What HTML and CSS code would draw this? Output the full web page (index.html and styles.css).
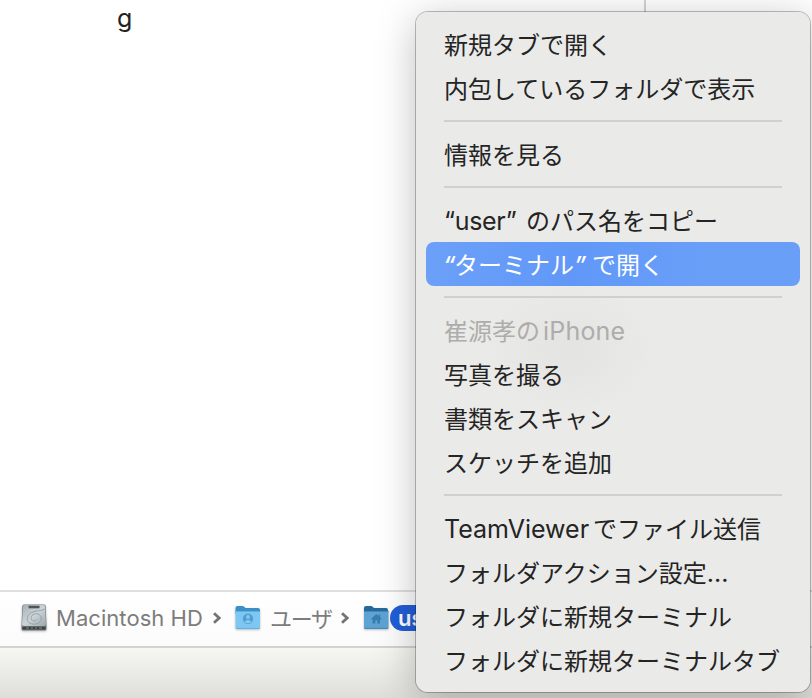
FILE: index.html
```html
<!DOCTYPE html>
<html lang="ja">
<head>
<meta charset="utf-8">
<title>Finder</title>
<link rel="stylesheet" href="styles.css">
</head>
<body>
<div class="window">
  <main class="files">
    <div class="file-name">g</div>
    <div class="column-line"></div>
  </main>
  <nav class="pathbar">
    <svg class="icon drive" width="28" height="30" viewBox="0 0 28 30">
      <defs>
        <linearGradient id="metal" x1="0" y1="0" x2="1" y2="1">
          <stop offset="0" stop-color="#a7afb4"/><stop offset=".5" stop-color="#cbd4d9"/><stop offset="1" stop-color="#9da6ab"/>
        </linearGradient>
      </defs>
      <path d="M4 1.500h20q1.500 0 1.700 1.500L26.500 22v4q0 1.500-1.500 1.500h-22Q1.500 27.500 1.500 26v-4L2.300 3Q2.500 1.500 4 1.500z" fill="#777e80"/>
      <path d="M4.500 2h19q1.500 0 1.600 1.500L26 21q0 2-2 2h-20q-2 0-2-2L2.900 3.500Q3 2 4.500 2z" fill="url(#metal)"/>
      <path d="M8.500 2.700h11v2.600h-11z" fill="#505759"/>
      <path d="M24.500 6c-3 2.500-8 1-13 3.500C7 12 6 17 9 19.500c3 2.300 8.500 2.200 11-.8 2.800-3.600.5-8-3.500-8-3.200 0-5.500 2-5.500 4.500 0 3 4.500 3.500 6 1.200" fill="none" stroke="#929ca2" stroke-width=".9"/>
      <path d="M2.500 23.700h23v2.800h-23z" fill="#3c4142"/>
      <path d="M6 25h3M11 25h2M15 25h2M19 25h3" stroke="#858b8c" stroke-width="1.200"/>
    </svg>
    <span class="crumb hd">Macintosh HD</span>
    <svg class="chevron" width="10" height="14" viewBox="0 0 10 14"><path d="M2 2.300 7.200 7 2 11.700"/></svg>
    <svg class="icon users" width="28" height="26" viewBox="0 0 28 26">
      <path d="M1.500 3Q1.500 1 3.500 1H9l2.600 2H24q2 0 2 2v4H1.500z" fill="#3b8fc6"/>
      <path d="M1.500 6h24.500v16.500q0 1.500-1.500 1.500H3q-1.500 0-1.500-1.500z" fill="#7fc7f3"/>
      <path d="M1.500 6.500h24.500M2 23.400h23.500" stroke="#5eb0e0"/>
      <circle cx="14" cy="13.700" r="5.200" fill="#509fd1"/>
      <circle cx="14" cy="12" r="1.900" fill="#86c9f2"/>
      <path d="M10.400 16.700q3.600-3.500 7.200 0-3.600 3-7.200 0z" fill="#86c9f2"/>
    </svg>
    <span class="crumb ja">ユーザ</span>
    <svg class="chevron second" width="10" height="14" viewBox="0 0 10 14"><path d="M2 2.300 7.200 7 2 11.700"/></svg>
    <svg class="icon home" width="27" height="26" viewBox="0 0 27 26">
      <path d="M1 3Q1 1 3 1h5.500l2.600 2H23q2 0 2 2v4H1z" fill="#28699b"/>
      <path d="M1 6h24.500v16.500q0 1.500-1.500 1.500H2.500Q1 24 1 22.500z" fill="#5da3d3"/>
      <path d="M1 6.500h24.500M1.500 23.400h23.500" stroke="#4389bb"/>
      <path d="m8 14 5.300-5 2.200 2V9.500h1.700v3l1.600 1.500-.8.800-1-.8v4.500h-2.700v-3.200h-2v3.200H9.600V14l-.8.800z" fill="#387db0"/>
    </svg>
    <span class="selected">user</span>
  </nav>
  <div class="desktop"></div>
</div>

<div class="menu">
  <div class="item">新規タブで開く</div>
  <div class="item">内包しているフォルダで表示</div>
  <div class="separator"></div>
  <div class="item">情報を見る</div>
  <div class="separator"></div>
  <div class="item"><span class="latin user">“user”</span>のパス名をコピー</div>
  <div class="item active"><span class="quote">“</span>ターミナル<span class="quote close">”</span>で開く</div>
  <div class="separator"></div>
  <div class="item disabled">崔源孝の<span class="latin phone">iPhone</span></div>
  <div class="item">写真を撮る</div>
  <div class="item">書類をスキャン</div>
  <div class="item">スケッチを追加</div>
  <div class="separator"></div>
  <div class="item"><span class="latin team">TeamViewer</span>でファイル送信</div>
  <div class="item">フォルダアクション設定<span class="latin dots">...</span></div>
  <div class="item">フォルダに新規ターミナル</div>
  <div class="item">フォルダに新規ターミナルタブ</div>
</div>
</body>
</html>
```

FILE: styles.css
```css
* { box-sizing: border-box; }
body {
  margin: 0;
  width: 812px;
  height: 698px;
  overflow: hidden;
  background: #fff;
  font-family: Inter, "Noto Sans CJK JP", sans-serif;
}
.window { height: 698px; display: flex; flex-direction: column; }
.files { height: 590px; display: flex; }
.file-name {
  width: 644px;
  padding-left: 117px;
  font-size: 25px;
  line-height: 36px;
  color: #222;
}
.column-line { width: 2px; background: #d3d3d3; }
.pathbar {
  height: 58px;
  display: flex;
  align-items: center;
  padding: 0 0 2px 20px;
  border-top: 2px solid #dfdfdf;
  border-bottom: 2px solid #d2d2d0;
  background: linear-gradient(#fff, #fbfbfb);
  white-space: nowrap;
}
.icon { flex: none; filter: drop-shadow(0 1px 1px rgba(0,0,0,.25)); }
.crumb { color: #7c7c7c; font-size: 22px; line-height: 30px; }
.hd { width: 148px; margin-left: 8px; letter-spacing: .05px; }
.ja { font-family: "Noto Sans CJK JP", sans-serif; width: 63px; margin-left: 8px; padding-bottom: 2px; letter-spacing: -1.3px; }
.chevron { flex: none; margin-left: 8px; fill: none; stroke: #737373; stroke-width: 2.8; }
.users { margin-left: 12px; }
.chevron.second { margin-left: 7px; }
.home { margin-left: 13px; }
.selected {
  height: 26px;
  width: 80px;
  padding-left: 8px;
  border-radius: 13px;
  background: #235ed8;
  color: #fff;
  font-size: 22px;
  font-weight: 600;
  line-height: 26px;
}
.desktop { height: 50px; background: linear-gradient(#f7f7f2, #dededa); }
.menu {
  position: absolute;
  left: 416px;
  top: 12px;
  width: 394px;
  height: 680px;
  padding: 10px;
  border-radius: 12px;
  background: radial-gradient(ellipse 85px 65px at 154px 338px, #e3e3e1, #eaeae8 100%);
  box-shadow: 0 0 0 1px rgba(0,0,0,.25), 0 8px 40px rgba(0,0,0,.26);
  font-family: "Noto Sans CJK JP", sans-serif;
  font-size: 24px;
  color: #242424;
}
.item {
  height: 44px;
  padding-left: 18px;
  border-radius: 8px;
  line-height: 44px;
  white-space: nowrap;
}
.active { color: #fff; background: linear-gradient(100deg, #6ca0f8, #6198f8 40%, #6a9ff8 75%); }
.disabled { color: #adadab; }
.separator { height: 22px; padding: 10px 18px; }
.separator::before { content: ""; display: block; height: 2px; background: #d0d0ce; }
.latin, .quote { display: inline-block; font-family: Inter, sans-serif; line-height: 44px; }
.quote { font-style: italic; width: 11px; margin-left: -1px; font-weight: 500; }
.quote.close { width: 18px; margin-left: 0; }
.latin { font-size: 25px; }
.user { width: 82px; letter-spacing: -.3px; }
.phone { margin-left: 3px; letter-spacing: .2px; }
.team { width: 149px; }
```
